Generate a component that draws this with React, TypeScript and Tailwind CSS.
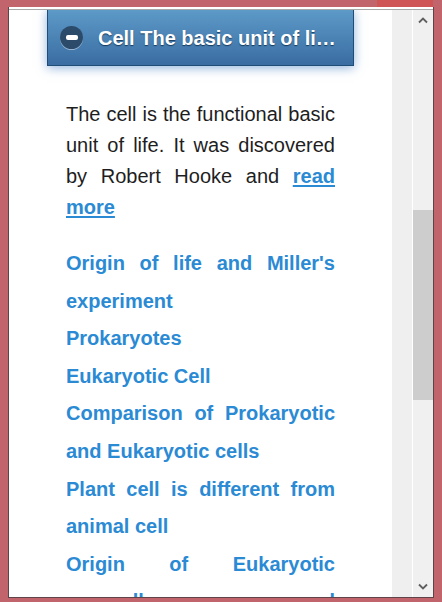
import React from 'react'

const links = [
  "Origin of life and Miller's experiment",
  'Prokaryotes',
  'Eukaryotic Cell',
  'Comparison of Prokaryotic and Eukaryotic cells',
  'Plant cell is different from animal cell',
  'Origin of Eukaryotic organelles – a survey and review',
]

function Chevron({ down }: { down?: boolean }) {
  return (
    <svg width="10" height="7" viewBox="0 0 10 7" className={down ? 'rotate-180' : ''}>
      <path d="M1 5.5 L5 1.5 L9 5.5" fill="none" stroke="#5f5f5f" strokeWidth="1.8" />
    </svg>
  )
}

export default function App() {
  return (
    <div className="w-[442px] h-[602px] bg-[#c1646b] flex flex-col font-['Liberation_Sans',Arial,sans-serif]">
      <div className="h-[7px] flex justify-end pr-[9px]">
        <div className="w-[56px] bg-[#cf5456]" />
      </div>
      <div className="mx-[8px] h-[591px] border-x border-b border-[#5e4448] flex flex-col">
        <div className="h-[2px] bg-white" />
        <div className="h-px bg-[#a8a8a8]" />
        <div className="flex flex-1 min-h-0">
          <main className="w-[383px] bg-white overflow-hidden px-[57px]">
            <div className="-mx-[19px] -mt-px h-[57px] flex items-center pl-[12px] pr-[18px] border border-[#1f4d78] bg-gradient-to-b from-[#5d9ac8] to-[#3a6da2] shadow-[0_2px_10px_rgba(58,120,195,0.55)]">
              <div className="w-[23px] h-[23px] rounded-full bg-[#2c4a69] shadow-[0_1px_0_rgba(255,255,255,0.45)] flex items-center justify-center shrink-0">
                <div className="w-[12px] h-[5px] rounded-[2px] bg-white" />
              </div>
              <span className="ml-[15px] whitespace-nowrap text-white font-bold text-[20px] [text-shadow:0_1px_1px_rgba(10,40,70,0.8)]">
                Cell The basic unit of li…
              </span>
            </div>

            <p className="mt-[33px] text-[20px] leading-[31px] text-justify text-[#1e1e1e]">
              The cell is the functional basic unit of life. It was discovered by Robert Hooke and{' '}
              <a className="font-bold text-[#2b8ad4] underline decoration-2 underline-offset-2">read more</a>
            </p>

            <div className="mt-[22px]">
              {links.map((l) => (
                <a key={l} className="block text-[20px] leading-[37.6px] font-bold text-justify text-[#2b8ad4]">
                  {l}
                </a>
              ))}
            </div>
          </main>
          <div className="w-[20px] bg-[#efefef]" />
          <div className="w-px bg-white" />
          <div className="w-[20px] bg-[#f0f0f0] flex flex-col">
            <div className="h-[21px] flex items-center justify-center">
              <Chevron />
            </div>
            <div className="h-[179px]" />
            <div className="h-[190px] bg-[#cdcdcd]" />
            <div className="flex-1" />
            <div className="h-[21px] flex items-center justify-center">
              <Chevron down />
            </div>
          </div>
        </div>
      </div>
    </div>
  )
}
